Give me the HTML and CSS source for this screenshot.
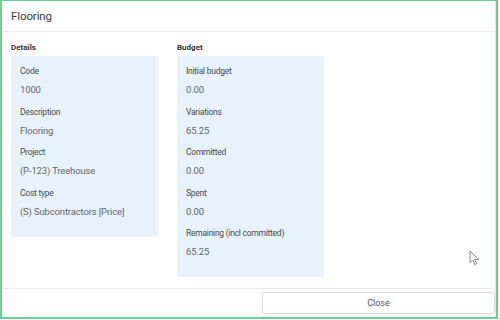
FILE: index.html
```html
<!DOCTYPE html>
<html>
<head>
<meta charset="utf-8">
<link rel="stylesheet" href="styles.css">
</head>
<body>
<div class="frame">
  <div class="modal">
    <div class="header">Flooring</div>
    <div class="content">
      <div class="col">
        <div class="section-title">Details</div>
        <div class="panel panel-details">
          <div class="field"><div class="label">Code</div><div class="value">1000</div></div>
          <div class="field"><div class="label">Description</div><div class="value">Flooring</div></div>
          <div class="field"><div class="label">Project</div><div class="value">(P-123) Treehouse</div></div>
          <div class="field"><div class="label">Cost type</div><div class="value">(S) Subcontractors [Price]</div></div>
        </div>
      </div>
      <div class="col">
        <div class="section-title">Budget</div>
        <div class="panel panel-budget">
          <div class="field"><div class="label">Initial budget</div><div class="value">0.00</div></div>
          <div class="field"><div class="label">Variations</div><div class="value">65.25</div></div>
          <div class="field"><div class="label">Committed</div><div class="value">0.00</div></div>
          <div class="field"><div class="label">Spent</div><div class="value">0.00</div></div>
          <div class="field"><div class="label">Remaining (incl committed)</div><div class="value">65.25</div></div>
        </div>
      </div>
    </div>
    <div class="footer">
      <button class="close-btn">Close</button>
    </div>
    <svg class="cursor" width="12" height="16" viewBox="0 0 12 16">
      <path d="M1 1 L1 12.5 L3.8 10 L5.8 14.5 L7.6 13.7 L5.7 9.4 L9.6 9.4 Z" fill="#fff" stroke="#777" stroke-width="0.9" stroke-linejoin="round"/>
    </svg>
  </div>
</div>
</body>
</html>
```
FILE: styles.css
```css
html, body {
  margin: 0;
  padding: 0;
  background: #fff;
}
body {
  width: 500px;
  height: 320px;
  font-family: Roboto, "Noto Sans", sans-serif;
  color: #555;
}
.frame {
  width: 498px;
  height: 319px;
  box-sizing: border-box;
  border: 2px solid #6fce98;
  border-top-width: 1px;
}
.modal {
  position: relative;
  height: 100%;
  box-sizing: border-box;
  border-right: 1px solid #e4e4e4;
  display: flex;
  flex-direction: column;
}
.header {
  height: 31px;
  box-sizing: border-box;
  padding: 8px 0 0 9px;
  font-size: 11.5px;
  letter-spacing: -0.1px;
  color: #3a3a3a;
  border-bottom: 1px solid #ececec;
}
.content {
  flex: 1;
  display: flex;
  gap: 19px;
  padding: 11px 0 0 9px;
}
.col {
  width: 147px;
}
.section-title {
  font-size: 8px;
  font-weight: 700;
  color: #333;
  height: 12px;
  margin-bottom: 1px;
}
.panel {
  background: #e8f2fd;
  padding: 5px 9px 0;
  box-sizing: border-box;
}
.panel-details {
  height: 181px;
}
.panel-budget {
  height: 221px;
}
.field {
  height: 40.5px;
}
.label {
  font-size: 8.5px;
  letter-spacing: -0.25px;
  color: #4a4a4a;
  height: 20px;
  line-height: 20px;
}
.value {
  font-size: 9.5px;
  letter-spacing: -0.15px;
  color: #666;
  line-height: 18px;
}
.footer {
  height: 29px;
  border-top: 1px solid #ececec;
  display: flex;
  justify-content: flex-end;
  align-items: flex-start;
  padding-top: 3px;
  box-sizing: border-box;
}
.close-btn {
  width: 233px;
  height: 22px;
  background: #fff;
  border: 1px solid #dcdcdc;
  border-radius: 3px;
  font-family: Roboto, "Noto Sans", sans-serif;
  font-size: 9px;
  color: #555;
}
.cursor {
  position: absolute;
  left: 467px;
  top: 249px;
}
```
